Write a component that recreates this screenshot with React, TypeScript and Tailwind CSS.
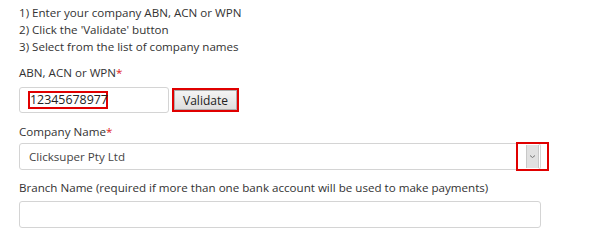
export default function App() {
  return (
    <div
      className="h-[245px] w-[602px] bg-white pl-[19px] pt-[4px] text-[11.6px] leading-[17px] text-[#333]"
      style={{ fontFamily: '"Open Sans", "Liberation Sans", sans-serif' }}
    >
      <div>1) Enter your company ABN, ACN or WPN</div>
      <div>2) Click the 'Validate' button</div>
      <div>3) Select from the list of company names</div>

      <div className="mt-[9px]">
        ABN, ACN or WPN<span className="text-[#e02020]">*</span>
      </div>
      <div className="mt-[6px] flex items-center gap-[3px]">
        <div className="flex h-[26px] w-[150px] items-center rounded-[3px] border border-[#d4d4d4] pl-[8px]">
          <span className="w-[80px] border-2 border-[#e00000] text-[12.4px] leading-[14px] text-[#222]">12345678977</span>
        </div>
        <div className="flex h-[24px] w-[67px] items-center justify-center border-2 border-[#e00000]">
          <div className="flex h-[20px] w-[63px] items-center justify-center border border-[#adadad] bg-gradient-to-b from-[#f4f4f4] to-[#dedede] text-[12px] text-[#222]">
            Validate
          </div>
        </div>
      </div>

      <div className="mt-[10px]">
        Company Name<span className="text-[#e02020]">*</span>
      </div>
      <div className="relative mt-[3px] h-[27px] w-[522px]">
        <div className="flex h-full w-full items-center rounded-[3px] border border-[#d4d4d4] pl-[9px] text-[#444]">
          Clicksuper Pty Ltd
        </div>
        <div className="absolute left-[497px] top-[-1px] flex h-[29px] w-[33px] justify-center border-2 border-[#e00000] pt-[1px]">
          <div className="flex h-[23px] w-[13px] items-center justify-center border-x border-[#c8c8c8] bg-[#e1e1e1]">
            <svg width="7" height="5" viewBox="0 0 7 5" fill="none">
              <path d="M1 1.5L3.5 3.5L6 1.5" stroke="#777" strokeWidth="1" />
            </svg>
          </div>
        </div>
      </div>

      <div className="mt-[9px]">
        Branch Name (required if more than one bank account will be used to make payments)
      </div>
      <div className="mt-[5px] h-[27px] w-[522px] rounded-[3px] border border-[#d4d4d4]" />
    </div>
  );
}
